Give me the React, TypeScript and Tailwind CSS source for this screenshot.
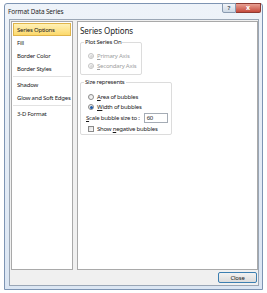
import React from "react";

const font = { fontFamily: '"Noto Sans", "Open Sans", sans-serif' };

const navItems = [
  { label: "Series Options", active: true },
  { label: "Fill" },
  { label: "Border Color" },
  { label: "Border Styles", sep: true },
  { label: "Shadow" },
  { label: "Glow and Soft Edges", sep: true },
  { label: "3-D Format" },
];

function Radio({ checked, disabled }: { checked?: boolean; disabled?: boolean }) {
  return (
    <span
      className={`w-[6px] h-[6px] rounded-full border flex items-center justify-center shrink-0 ${
        disabled ? "border-[#c4c4c4] bg-[#f4f4f4]" : "border-[#8a8a8a] bg-gradient-to-br from-[#e4e4e4] to-white"
      }`}
    >
      {checked && <span className="w-[3px] h-[3px] rounded-full bg-[#1f5aa8]" />}
      {disabled && <span className="w-[3px] h-[3px] rounded-full bg-[#d8d8d8]" />}
    </span>
  );
}

export default function App() {
  return (
    <div className="w-[267px] h-[293px] bg-white pt-[3px] pl-[4px] text-[6px] tracking-[-0.22px] leading-[8px] text-[#1a1a1a] whitespace-nowrap" style={font}>
      <div className="relative w-[259px] h-[287px] border border-[#7d94b3] rounded-t-[3px] bg-gradient-to-b from-[#eef3f9] to-[#dbe6f3] flex flex-col">
        {/* title bar */}
        <div className="h-[15px] flex items-center pl-[3px] text-[6.4px] tracking-[-0.1px] text-[#1e1e1e]">Format Data Series</div>
        <div className="absolute top-[-1px] right-[1px] flex tracking-normal">
          <div className="w-[14px] h-[10px] border border-[#8a9bb1] rounded-bl-[2px] bg-gradient-to-b from-[#f2f5f9] to-[#cdd8e5] flex items-center justify-center text-[6px] font-bold text-[#4a5868]">
            ?
          </div>
          <div className="w-[25px] h-[10px] border border-[#8e3a32] border-l-0 rounded-br-[2px] bg-gradient-to-b from-[#e8a093] to-[#c4493c] flex items-center justify-center text-[7px] font-bold text-white">
            x
          </div>
        </div>

        {/* client area */}
        <div className="ml-[4px] mr-[3px] mb-[3px] flex-1 border border-[#9aa6b5] bg-[#f0f0f0] flex flex-col pt-[1px] pl-[1px]">
          <div className="flex gap-[4px] h-[249px]">
            <div className="w-[62px] h-full border border-[#a9a9a9] bg-white pt-[1px] px-[1px]">
              {navItems.map((it) => (
                <div key={it.label}>
                  <div
                    className={`h-[13px] flex items-center pl-[3px] ${
                      it.active
                        ? "border border-[#e0b44a] bg-gradient-to-b from-[#fff1b5] to-[#fcd96a]"
                        : "border border-transparent"
                    }`}
                  >
                    {it.label}
                  </div>
                  {it.sep && <div className="h-px my-[1px] bg-[#e2e2e2]" />}
                </div>
              ))}
            </div>

            <div className="flex-1 h-full border border-[#a9a9a9] bg-white pl-[2px] pt-[3px]">
              <div className="text-[8px] tracking-[-0.1px] leading-[12px] text-[#1e1e1e]">Series Options</div>

              <div className="relative mt-[5px] w-[62px] h-[33px] border border-[#dcdcdc] rounded-[2px] pt-[8px] pl-[7px]">
                <span className="absolute top-[-5px] left-[3px] bg-white px-[1px]">Plot Series On</span>
                <div className="flex items-center gap-[3px] h-[10px] text-[#a0a0a0]">
                  <Radio disabled />
                  <span>
                    <span className="underline">P</span>rimary Axis
                  </span>
                </div>
                <div className="flex items-center gap-[3px] h-[10px] text-[#a0a0a0]">
                  <Radio disabled />
                  <span>
                    <span className="underline">S</span>econdary Axis
                  </span>
                </div>
              </div>

              <div className="relative mt-[7px] w-[92px] h-[53px] border border-[#dcdcdc] rounded-[2px] pt-[9px] pl-[5px]">
                <span className="absolute top-[-5px] left-[3px] bg-white px-[1px]">Size represents</span>
                <div className="flex items-center gap-[3px] h-[10px] pl-[2px]">
                  <Radio />
                  <span>
                    <span className="underline">A</span>rea of bubbles
                  </span>
                </div>
                <div className="flex items-center gap-[3px] h-[10px] pl-[2px]">
                  <Radio checked />
                  <span>
                    <span className="underline">W</span>idth of bubbles
                  </span>
                </div>
                <div className="flex items-center gap-[4px] h-[11px]">
                  <span>
                    <span className="underline">S</span>cale bubble size to :
                  </span>
                  <div className="w-[24px] h-[10px] border border-[#a5acb5] bg-white flex items-center pl-[2px]">60</div>
                </div>
                <div className="flex items-center gap-[3px] h-[11px] pl-[2px]">
                  <span className="w-[6px] h-[6px] border border-[#8a8a8a] bg-gradient-to-br from-[#dcdcdc] to-white shrink-0" />
                  <span>
                    Show <span className="underline">n</span>egative bubbles
                  </span>
                </div>
              </div>
            </div>
          </div>

          <div className="flex-1 flex items-center justify-end pr-[1px]">
            <div className="w-[39px] h-[11px] border border-[#3c7fb1] rounded-[2px] bg-gradient-to-b from-[#f2f2f2] to-[#dcdcdc] flex items-center justify-center">
              Close
            </div>
          </div>
        </div>
      </div>
    </div>
  );
}
